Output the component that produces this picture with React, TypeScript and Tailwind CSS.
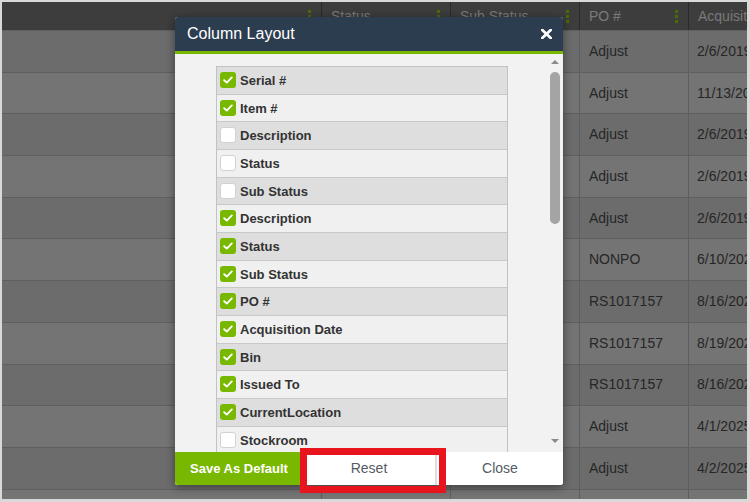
import React from "react";

const rows = [
  ["Adjust", "2/6/2019"],
  ["Adjust", "11/13/2019"],
  ["Adjust", "2/6/2019"],
  ["Adjust", "2/6/2019"],
  ["Adjust", "2/6/2019"],
  ["NONPO", "6/10/2020"],
  ["RS1017157", "8/16/2021"],
  ["RS1017157", "8/19/2021"],
  ["RS1017157", "8/16/2021"],
  ["Adjust", "4/1/2025"],
  ["Adjust", "4/2/2025"],
  ["", ""],
];

const items: [string, boolean][] = [
  ["Serial #", true],
  ["Item #", true],
  ["Description", false],
  ["Status", false],
  ["Sub Status", false],
  ["Description", true],
  ["Status", true],
  ["Sub Status", true],
  ["PO #", true],
  ["Acquisition Date", true],
  ["Bin", true],
  ["Issued To", true],
  ["CurrentLocation", true],
  ["Stockroom", false],
  ["Quantity", false],
  ["Notes", false],
];

function Dots() {
  return (
    <div className="flex flex-col gap-[2px] mr-[10px]">
      <div className="w-[3px] h-[3px] bg-[#4d6b05]" />
      <div className="w-[3px] h-[3px] bg-[#4d6b05]" />
      <div className="w-[3px] h-[3px] bg-[#4d6b05]" />
    </div>
  );
}

function HeadCell({ w, label, first }: { w: string; label: string; first?: boolean }) {
  return (
    <div className={`${w} h-full flex items-center justify-between ${first ? "" : "border-l border-[#2a2a2a]"} overflow-hidden`}>
      <span className="pl-[9px] text-[14px] text-[#7a7a7a] whitespace-nowrap">{label}</span>
      {label !== "Acquisition Date" && <Dots />}
    </div>
  );
}

function Check({ on }: { on: boolean }) {
  if (on)
    return (
      <div className="w-[16px] h-[16px] rounded-[3px] bg-[#79b800] flex items-center justify-center mt-[5px] shrink-0">
        <svg width="10" height="8" viewBox="0 0 10 8">
          <polyline points="1.2,4.2 3.8,6.6 8.8,1.4" fill="none" stroke="#fff" strokeWidth="1.9" strokeLinecap="round" strokeLinejoin="round" />
        </svg>
      </div>
    );
  return <div className="w-[16px] h-[16px] rounded-[3px] bg-white border border-[#d2d2d2] mt-[5px] shrink-0" />;
}

export default function App() {
  return (
    <div
      className="w-[750px] h-[502px] relative overflow-hidden bg-[#d9d9d9] pt-[2px] pl-[2px] pr-[3px] pb-[3px]"
      style={{ fontFamily: '"Liberation Sans", Arial, sans-serif' }}
    >
      <div className="w-full h-full bg-[#6e6e6e] flex flex-col overflow-hidden">
        <div className="h-[28px] bg-[#3d3d3d] flex shrink-0">
          <HeadCell w="w-[319px]" label="" first />
          <HeadCell w="w-[129px]" label="Status" />
          <HeadCell w="w-[129px]" label="Sub Status" />
          <HeadCell w="w-[109px]" label="PO #" />
          <HeadCell w="flex-1" label="Acquisition Date" />
        </div>
        {rows.map((r, i) => (
          <div
            key={i}
            className={`h-[41.7px] shrink-0 flex border-t border-[#5f5f5f] ${i % 2 === 0 ? "bg-[#6c6c6c]" : "bg-[#747474]"}`}
          >
            <div className="w-[319px]" />
            <div className="w-[129px] border-l border-[#5e5e5e]" />
            <div className="w-[129px] border-l border-[#5e5e5e]" />
            <div className="w-[109px] border-l border-[#5e5e5e] flex items-center pl-[9px] text-[14px] text-[#262626] whitespace-nowrap overflow-hidden">
              {r[0]}
            </div>
            <div className="flex-1 border-l border-[#5e5e5e] flex items-center pl-[8px] text-[14px] text-[#262626] whitespace-nowrap overflow-hidden">
              {r[1]}
            </div>
          </div>
        ))}
      </div>

      {/* Modal */}
      <div className="absolute left-[175px] top-[17px] w-[388px] h-[468px] flex flex-col bg-[#f2f2f2] rounded-[3px] overflow-hidden shadow-[0_2px_10px_rgba(0,0,0,0.45)]">
        <div className="h-[37px] shrink-0 bg-[#2c3d50] border-b-[3px] border-[#79b800] flex items-center justify-between pl-[12px] pr-[11px]">
          <span className="text-[16px] text-white">Column Layout</span>
          <svg width="11" height="10" viewBox="0 0 11 10">
            <line x1="1.3" y1="1" x2="9.7" y2="9" stroke="#fff" strokeWidth="2.7" strokeLinecap="round" />
            <line x1="9.7" y1="1" x2="1.3" y2="9" stroke="#fff" strokeWidth="2.7" strokeLinecap="round" />
          </svg>
        </div>
        <div className="flex-1 flex min-h-0">
          <div className="flex-1 pl-[41px] pr-[40px] pt-[12px] overflow-hidden">
            <div className="border border-[#c2c2c2] border-b-0">
              {items.map(([label, on], i) => (
                <div
                  key={i}
                  className={`h-[27.67px] flex items-start pl-[3px] gap-[4px] border-b border-[#c8c8c8] ${i % 2 === 0 ? "bg-[#dedede]" : "bg-[#f0f0f0]"}`}
                >
                  <Check on={on} />
                  <span className="text-[13px] font-bold text-[#333] leading-[27px] whitespace-nowrap">{label}</span>
                </div>
              ))}
            </div>
          </div>
          <div className="w-[14px] flex flex-col items-center pt-[6px] pb-[9px] mr-[1px]">
            <div className="w-0 h-0 border-l-[4px] border-r-[4px] border-b-[4px] border-l-transparent border-r-transparent border-b-[#8a8a8a]" />
            <div className="w-[10px] h-[152px] mt-[8px] rounded-[5px] bg-[#a4a4a4]" />
            <div className="flex-1" />
            <div className="w-0 h-0 border-l-[4px] border-r-[4px] border-t-[4px] border-l-transparent border-r-transparent border-t-[#8a8a8a]" />
          </div>
        </div>
        <div className="h-[33px] shrink-0 flex bg-white">
          <div className="w-[128px] bg-[#79b800] flex items-center justify-center text-[13px] font-bold text-white">
            Save As Default
          </div>
          <div className="w-[134px] flex items-center justify-center text-[14px] text-[#555c66] border-r-[2px] border-[#dedede]">
            Reset
          </div>
          <div className="flex-1 flex items-center justify-center text-[14px] text-[#555c66]">Close</div>
        </div>
      </div>

      {/* Red annotation */}
      <div className="absolute left-[300px] top-[448px] w-[146px] h-[45px] border-[7px] border-[#e8141e]" />
    </div>
  );
}
